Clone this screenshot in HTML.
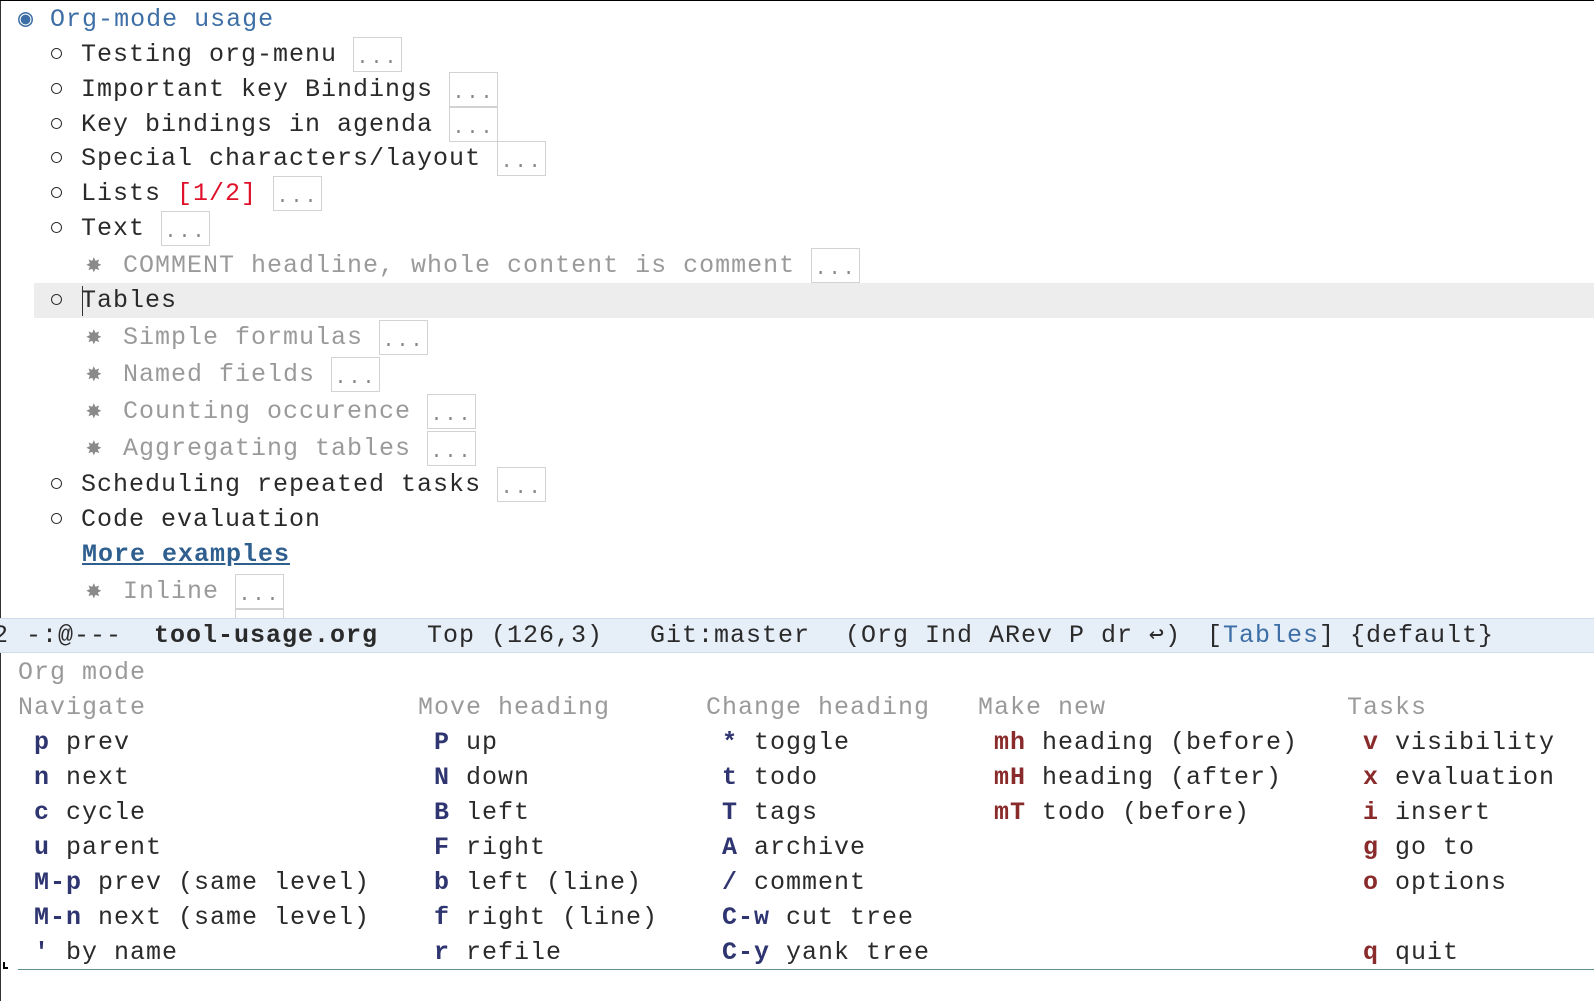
<!DOCTYPE html>
<html><head><meta charset="utf-8"><style>
html,body{margin:0;padding:0;}
body{width:1594px;height:1000px;position:relative;overflow:hidden;background:#fff;font-family:"Liberation Mono","DejaVu Sans Mono",monospace;font-size:25px;letter-spacing:1px;color:#2a2a2a;border-top:1px solid #000;box-sizing:border-box;}
.l{position:absolute;height:35px;line-height:35px;white-space:pre;}
.e{display:inline-block;width:49px;height:35px;border:1px solid #d2d2d2;box-sizing:border-box;vertical-align:top;color:#888;font-size:20px;line-height:42px;text-align:center;letter-spacing:2px;}
.g{color:#9a9a9a;}
.st{display:inline-block;width:37px;color:#8a8a8a;font-size:26px;}
.b{color:#3d6ea5;}
.k{color:#2e3570;font-weight:bold;}
.r{color:#8a2b2b;font-weight:bold;}
.h{color:#9a9a9a;}
</style></head><body>
<div style="position:absolute;left:0;top:0;width:1px;height:1000px;background:#333"></div>
<div style="position:absolute;left:34px;top:282px;width:1560px;height:35px;background:#ededed"></div>

<div class="l b" style="left:18px;top:1px">◉ Org-mode usage</div>
<div class="l" style="left:49px;top:36px">○ Testing org-menu <span class="e">...</span></div>
<div class="l" style="left:49px;top:71px">○ Important key Bindings <span class="e">...</span></div>
<div class="l" style="left:49px;top:106px">○ Key bindings in agenda <span class="e">...</span></div>
<div class="l" style="left:49px;top:140px">○ Special characters/layout <span class="e">...</span></div>
<div class="l" style="left:49px;top:175px">○ Lists <span style="color:#e0102a">[1/2]</span> <span class="e">...</span></div>
<div class="l" style="left:49px;top:210px">○ Text <span class="e">...</span></div>
<div class="l g" style="left:86px;top:247px"><span class="st">✸</span>COMMENT headline, whole content is comment <span class="e">...</span></div>
<div class="l" style="left:49px;top:282px">○ Tables</div>
<div style="position:absolute;left:82px;top:285px;width:1px;height:30px;background:#333"></div>
<div class="l g" style="left:86px;top:319px"><span class="st">✸</span>Simple formulas <span class="e">...</span></div>
<div class="l g" style="left:86px;top:356px"><span class="st">✸</span>Named fields <span class="e">...</span></div>
<div class="l g" style="left:86px;top:393px"><span class="st">✸</span>Counting occurence <span class="e">...</span></div>
<div class="l g" style="left:86px;top:430px"><span class="st">✸</span>Aggregating tables <span class="e">...</span></div>
<div class="l" style="left:49px;top:466px">○ Scheduling repeated tasks <span class="e">...</span></div>
<div class="l" style="left:49px;top:501px">○ Code evaluation</div>
<div class="l" style="left:82px;top:536px;color:#2f5f8f;font-weight:bold;text-decoration:underline">More examples</div>
<div class="l g" style="left:86px;top:573px"><span class="st">✸</span>Inline <span class="e">...</span></div>
<div style="position:absolute;left:235px;top:608px;width:49px;height:10px;border:1px solid #d2d2d2;border-bottom:none;box-sizing:border-box"></div>

<div style="position:absolute;left:0;top:617px;width:1594px;height:35px;background:#e6eef8;border-top:1px solid #cfdbe8;border-bottom:1px solid #cfdbe8;box-sizing:border-box"></div>
<div class="l" style="left:-7px;top:617px">2</div>
<div class="l" style="left:26px;top:617px">-:@---</div>
<div class="l" style="left:154px;top:617px;font-weight:bold">tool-usage.org</div>
<div class="l" style="left:427px;top:617px">Top (126,3)</div>
<div class="l" style="left:650px;top:617px">Git:master</div>
<div class="l" style="left:845px;top:617px">(Org Ind ARev P dr ↩)</div>
<div class="l" style="left:1207px;top:617px">[<span class="b">Tables</span>]</div>
<div class="l" style="left:1350px;top:617px">{default}</div>

<div class="l h" style="left:18px;top:654px">Org mode</div>
<div class="l h" style="left:18px;top:689px">Navigate</div>
<div class="l h" style="left:418px;top:689px">Move heading</div>
<div class="l h" style="left:706px;top:689px">Change heading</div>
<div class="l h" style="left:978px;top:689px">Make new</div>
<div class="l h" style="left:1347px;top:689px">Tasks</div>

<div class="l" style="left:34px;top:724px"><span class="k">p</span> prev</div>
<div class="l" style="left:34px;top:759px"><span class="k">n</span> next</div>
<div class="l" style="left:34px;top:794px"><span class="k">c</span> cycle</div>
<div class="l" style="left:34px;top:829px"><span class="k">u</span> parent</div>
<div class="l" style="left:34px;top:864px"><span class="k">M-p</span> prev (same level)</div>
<div class="l" style="left:34px;top:899px"><span class="k">M-n</span> next (same level)</div>
<div class="l" style="left:34px;top:934px"><span class="k">'</span> by name</div>

<div class="l" style="left:434px;top:724px"><span class="k">P</span> up</div>
<div class="l" style="left:434px;top:759px"><span class="k">N</span> down</div>
<div class="l" style="left:434px;top:794px"><span class="k">B</span> left</div>
<div class="l" style="left:434px;top:829px"><span class="k">F</span> right</div>
<div class="l" style="left:434px;top:864px"><span class="k">b</span> left (line)</div>
<div class="l" style="left:434px;top:899px"><span class="k">f</span> right (line)</div>
<div class="l" style="left:434px;top:934px"><span class="k">r</span> refile</div>

<div class="l" style="left:722px;top:724px"><span class="k">*</span> toggle</div>
<div class="l" style="left:722px;top:759px"><span class="k">t</span> todo</div>
<div class="l" style="left:722px;top:794px"><span class="k">T</span> tags</div>
<div class="l" style="left:722px;top:829px"><span class="k">A</span> archive</div>
<div class="l" style="left:722px;top:864px"><span class="k">/</span> comment</div>
<div class="l" style="left:722px;top:899px"><span class="k">C-w</span> cut tree</div>
<div class="l" style="left:722px;top:934px"><span class="k">C-y</span> yank tree</div>

<div class="l" style="left:994px;top:724px"><span class="r">mh</span> heading (before)</div>
<div class="l" style="left:994px;top:759px"><span class="r">mH</span> heading (after)</div>
<div class="l" style="left:994px;top:794px"><span class="r">mT</span> todo (before)</div>

<div class="l" style="left:1363px;top:724px"><span class="r">v</span> visibility</div>
<div class="l" style="left:1363px;top:759px"><span class="r">x</span> evaluation</div>
<div class="l" style="left:1363px;top:794px"><span class="r">i</span> insert</div>
<div class="l" style="left:1363px;top:829px"><span class="r">g</span> go to</div>
<div class="l" style="left:1363px;top:864px"><span class="r">o</span> options</div>
<div class="l" style="left:1363px;top:934px"><span class="r">q</span> quit</div>

<div style="position:absolute;left:18px;top:968px;width:1576px;height:1px;background:#5f8f8f"></div>
<div style="position:absolute;left:3px;top:966px;width:5px;height:2px;background:#000"></div>
<div style="position:absolute;left:3px;top:961px;width:2px;height:7px;background:#000"></div>
</body></html>
